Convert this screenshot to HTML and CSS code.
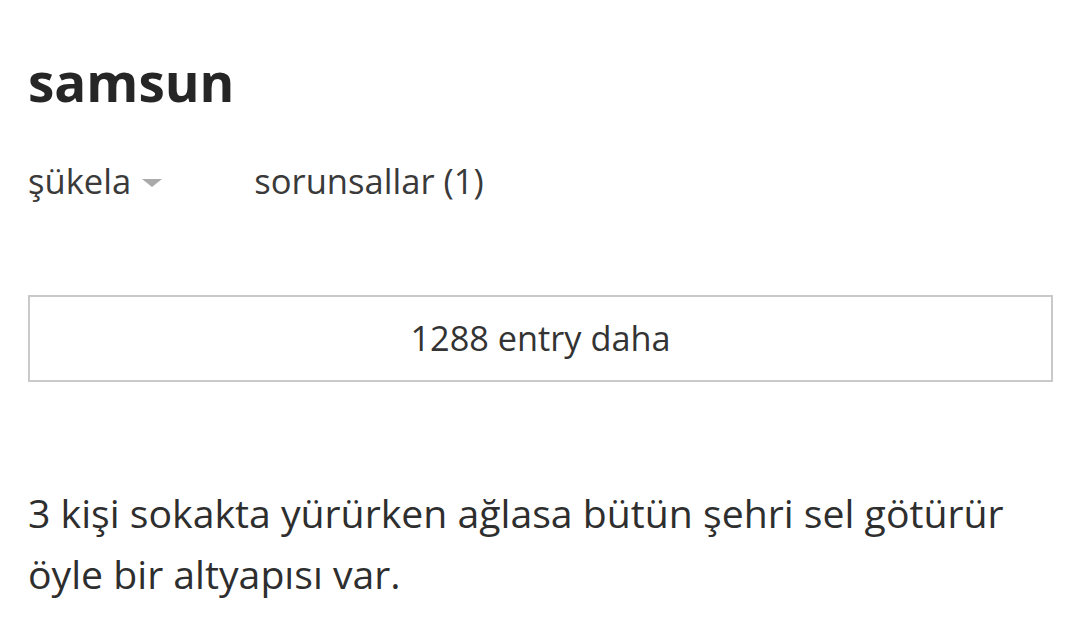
FILE: index.html
```html
<!DOCTYPE html>
<html lang="tr">
<head>
<meta charset="utf-8">
<title>samsun</title>
<link rel="stylesheet" href="styles.css">
</head>
<body>
<main class="topic">
  <h1 class="topic-title">samsun</h1>
  <nav class="topic-tabs">
    <span class="tab tab-sort">şükela<span class="caret"></span></span>
    <span class="tab">sorunsallar (1)</span>
  </nav>
  <button class="more-entries">1288 entry daha</button>
  <p class="entry">3 kişi sokakta yürürken ağlasa bütün şehri sel götürür öyle bir altyapısı var.</p>
</main>
</body>
</html>
```
FILE: styles.css
```css
html, body {
  margin: 0;
  background: #ffffff;
}

body {
  font-family: "Open Sans", "Noto Sans", sans-serif;
  color: #333333;
}

.topic {
  padding: 47px 28px 0 28px;
  display: flex;
  flex-direction: column;
}

.topic-title {
  margin: 0;
  font-size: 53px;
  font-weight: 700;
  line-height: 70px;
  color: #262626;
}

.topic-tabs {
  display: flex;
  align-items: center;
  gap: 92px;
  margin-top: 44px;
  font-size: 34.6px;
  line-height: 40px;
  color: #3a3a3a;
}

.tab-sort {
  display: flex;
  align-items: center;
}

.caret {
  width: 0;
  height: 0;
  margin-left: 11px;
  margin-top: 4px;
  border-left: 10px solid transparent;
  border-right: 10px solid transparent;
  border-top: 8px solid #aaaaaa;
}

.more-entries {
  margin-top: 94px;
  width: 1025px;
  height: 87px;
  background: #ffffff;
  border: 2px solid #c9c9c9;
  font-family: inherit;
  font-size: 34.3px;
  color: #333333;
  padding: 0 0 2px 0;
}

.entry {
  margin: 100px 0 0 0;
  width: 1024px;
  font-size: 39.2px;
  line-height: 61px;
  color: #2e2e2e;
}
```
